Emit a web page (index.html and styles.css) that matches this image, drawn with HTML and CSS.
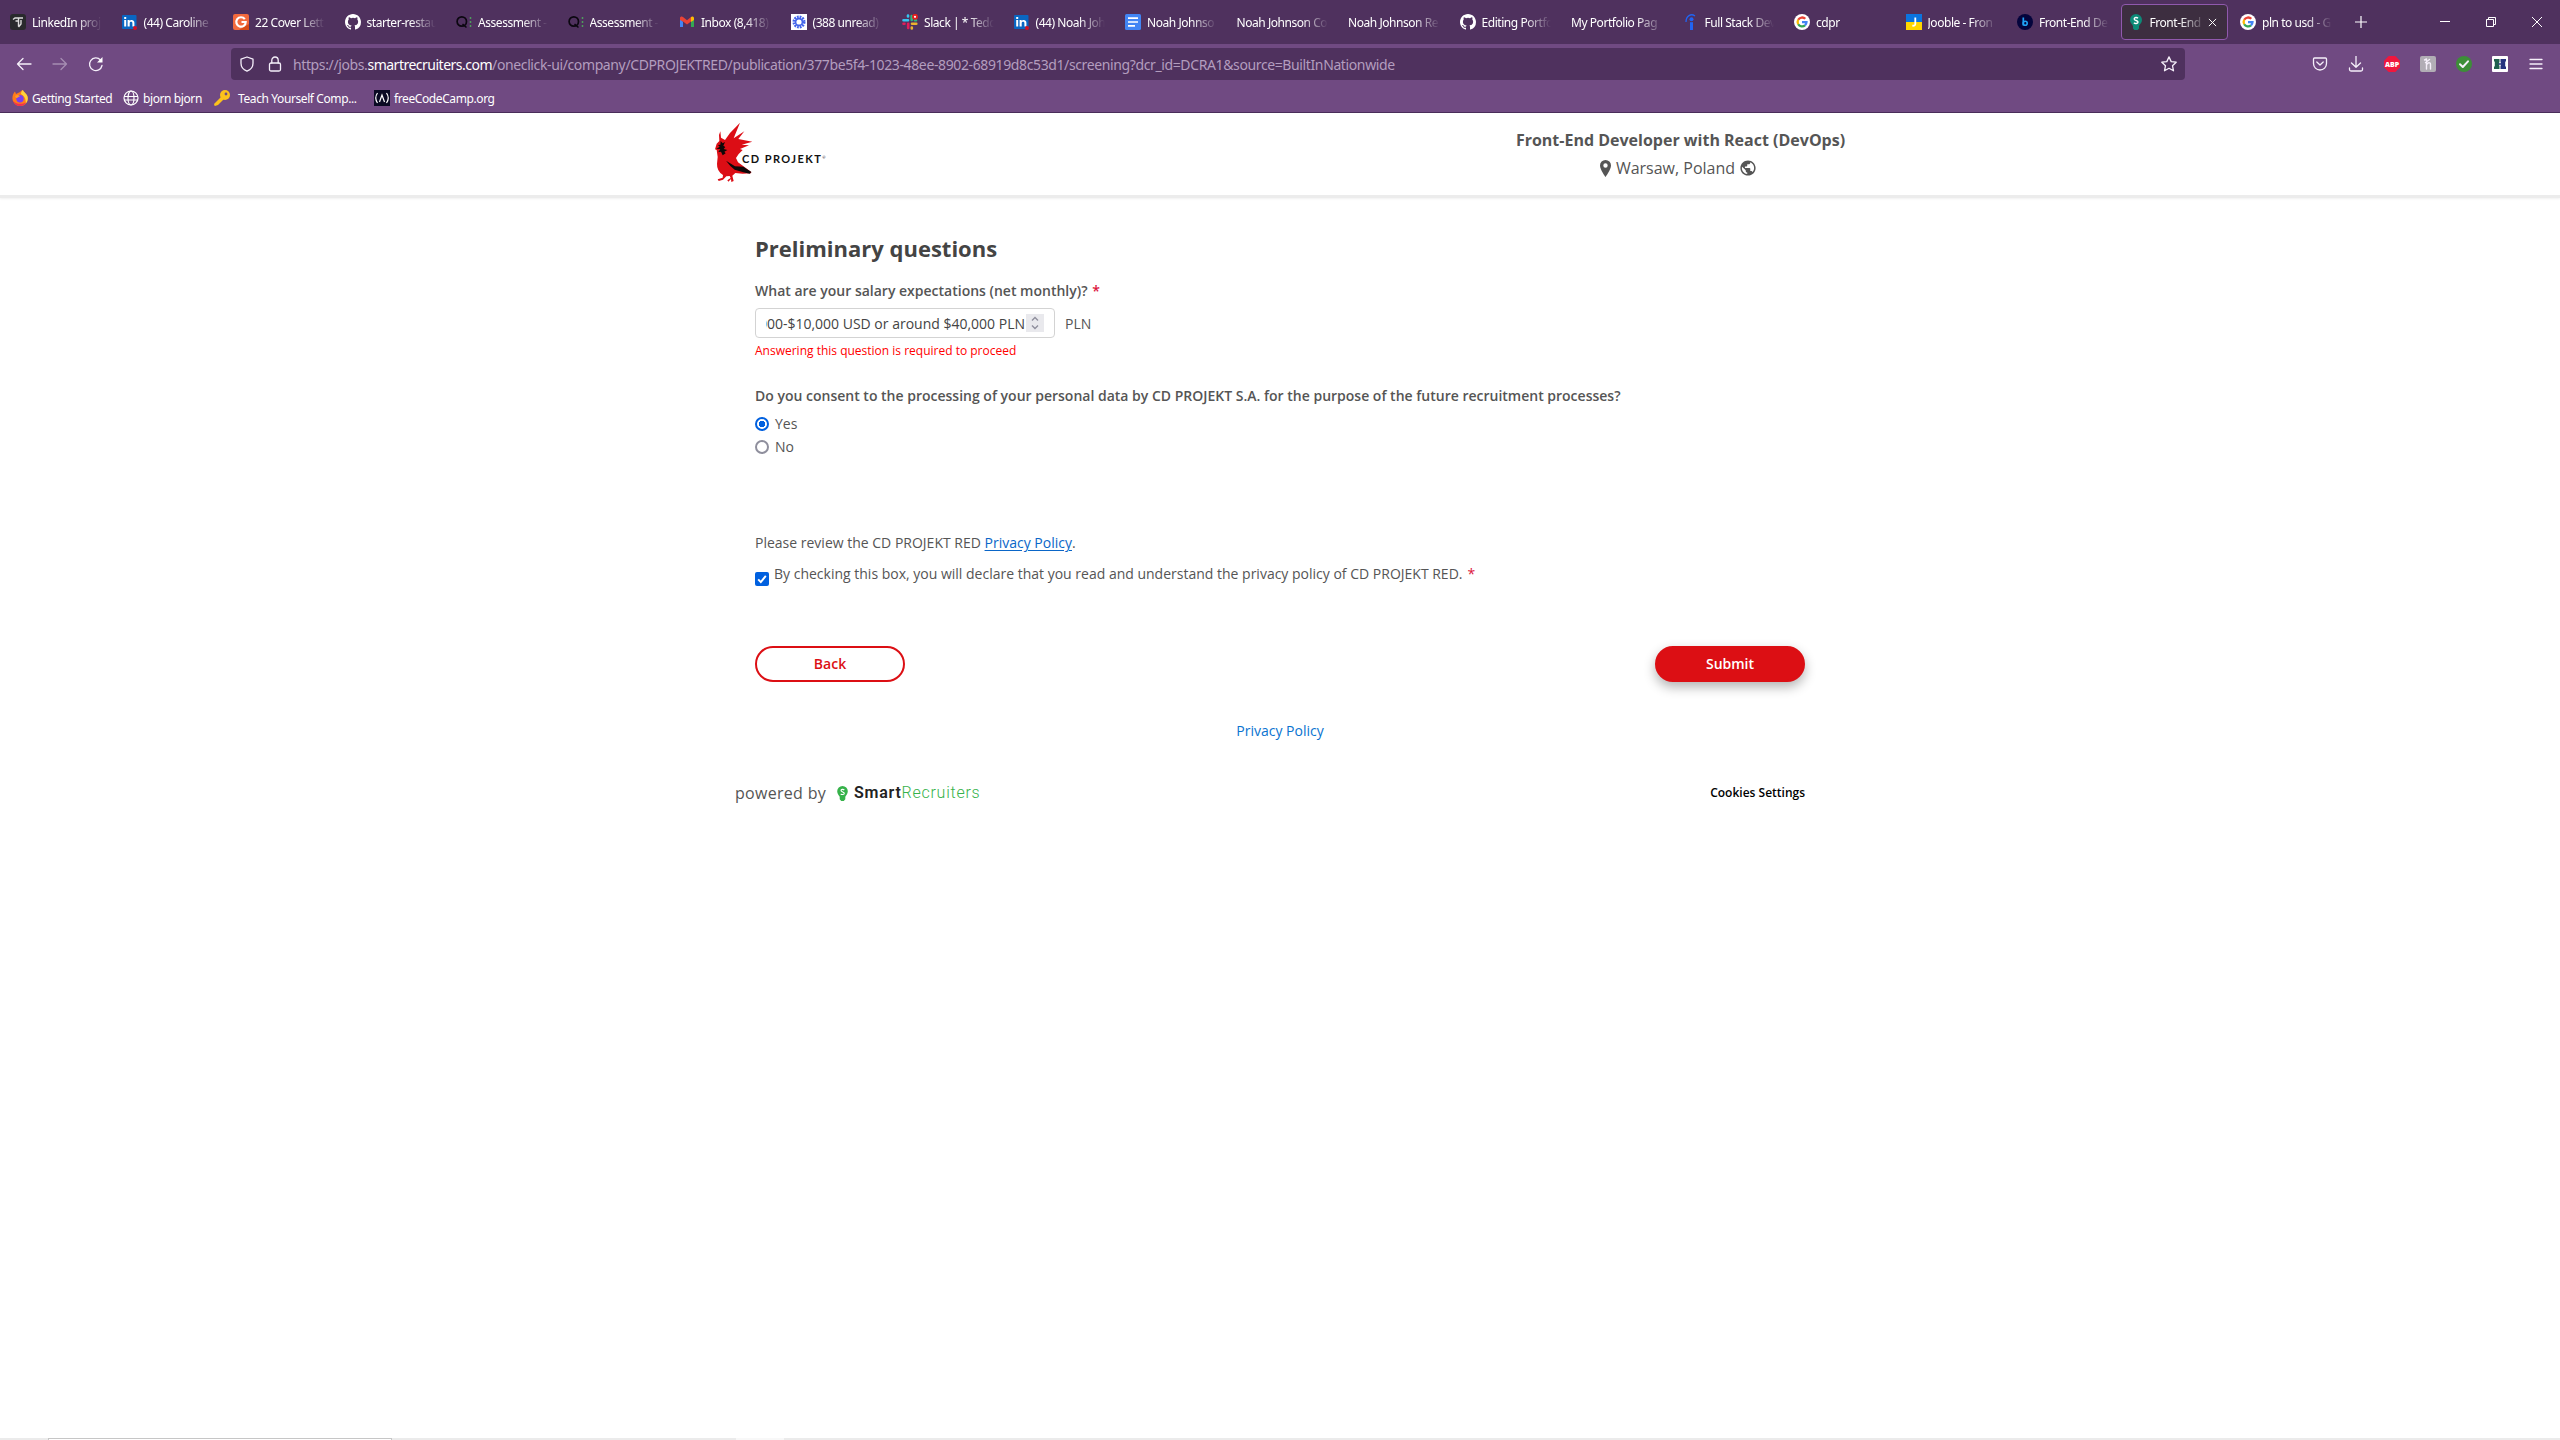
FILE: index.html
```html
<!DOCTYPE html>
<html lang="en">
<head>
<meta charset="utf-8">
<title>Front-End Developer with React (DevOps)</title>
<link rel="stylesheet" href="styles.css">
</head>
<body>
<svg class="defs" aria-hidden="true">
  <symbol id="github" viewBox="0 0 16 16"><path fill="#fff" d="M8 0C3.58 0 0 3.58 0 8c0 3.54 2.29 6.53 5.47 7.59.4.07.55-.17.55-.38 0-.19-.01-.82-.01-1.49-2.01.37-2.53-.49-2.69-.94-.09-.23-.48-.94-.82-1.13-.28-.15-.68-.52-.01-.53.63-.01 1.08.58 1.23.82.72 1.21 1.87.87 2.33.66.07-.52.28-.87.51-1.07-1.78-.2-3.64-.89-3.64-3.95 0-.87.31-1.59.82-2.15-.08-.2-.36-1.02.08-2.12 0 0 .67-.21 2.2.82a7.6 7.6 0 0 1 4 0c1.53-1.04 2.2-.82 2.2-.82.44 1.1.16 1.92.08 2.12.51.56.82 1.27.82 2.15 0 3.07-1.87 3.75-3.65 3.95.29.25.54.73.54 1.48 0 1.07-.01 1.93-.01 2.2 0 .21.15.46.55.38A8 8 0 0 0 16 8c0-4.42-3.58-8-8-8z"/></symbol>
  <symbol id="linkedin" viewBox="0 0 16 16"><rect x="0" y="1" width="14.5" height="14" rx="1" fill="#0a66c2"/><path fill="#fff" d="M2.2 6h2v6.600h-2zM2.200 3h2v2h-2zM5.600 6h2v1c.9-1.600 4.800-1.700 4.800 1.700v3.900h-2V9.200c0-2-2.700-1.900-2.700 0v3.400H5.600z"/><circle cx="13" cy="14" r="2" fill="#d11124"/></symbol>
  <symbol id="google" viewBox="0 0 16 16"><circle cx="8" cy="8" r="8" fill="#fff"/><g fill="none" stroke-width="2.300"><path stroke="#ea4335" d="M4.200 5.800A4.500 4.500 0 0 1 11.300 4.800"/><path stroke="#fbbc05" d="M4.200 10.200a4.500 4.500 0 0 1 0-4.400"/><path stroke="#34a853" d="M11 11.400a4.500 4.500 0 0 1-6.800-1.200"/><path stroke="#4285f4" d="M8 8.100h4.500A4.500 4.500 0 0 1 11 11.400"/></g></symbol>
  <symbol id="quiz" viewBox="0 0 16 16"><circle cx="5.800" cy="7.500" r="4.700" fill="none" stroke="#0b0710" stroke-width="1.700"/><path d="M6.500 10l4 3.500" stroke="#0b0710" stroke-width="1.600"/><path d="M14.500 3v11" stroke="#4e9c5b" stroke-width="1.500" stroke-dasharray="2 2"/></symbol>
</svg>

<header class="browser">
  <div class="tabs">
    <div class="tab"><svg class="fav" viewBox="0 0 16 16"><rect width="16" height="16" rx="3" fill="#292a2d"/><path d="M3 5.500L5 4h8M5.500 7h3v5.500M8.500 4v3M11 6v4l-2.500 3" fill="none" stroke="#ddd" stroke-width="1.400"/></svg><span class="label">LinkedIn proj</span></div>
    <div class="tab"><svg class="fav"><use href="#linkedin"/></svg><span class="label">(44) Caroline</span></div>
    <div class="tab"><svg class="fav" viewBox="0 0 16 16"><rect width="16" height="16" rx="2" fill="#f26a3d"/><path d="M6 16l10-6v6z" fill="#d84b17"/><path d="M11.800 5.200A4.700 4.700 0 1 0 12.700 8H8.500" fill="none" stroke="#fff" stroke-width="2.200"/></svg><span class="label">22 Cover Lett</span></div>
    <div class="tab"><svg class="fav"><use href="#github"/></svg><span class="label">starter-restau</span></div>
    <div class="tab"><svg class="fav"><use href="#quiz"/></svg><span class="label">Assessment -</span></div>
    <div class="tab"><svg class="fav"><use href="#quiz"/></svg><span class="label">Assessment -</span></div>
    <div class="tab"><svg class="fav" viewBox="0 0 16 16"><path d="M1 3v10h3V8z" fill="#4285f4"/><path d="M12 8v5h3V4z" fill="#34a853"/><path d="M1 4c0-1.500 2-2 3-1l4 3.200L12 3v4.500L8 10.500 4 7.500 1 6z" fill="#ea4335"/><path d="M12 3c1-1 3-.5 3 1v2l-3 2z" fill="#fbbc04"/></svg><span class="label">Inbox (8,418)</span></div>
    <div class="tab"><svg class="fav" viewBox="0 0 16 16"><rect width="16" height="16" fill="#fff"/><circle cx="8" cy="8" r="5" fill="none" stroke="#4263eb" stroke-width="3" stroke-dasharray="1.700 .918"/><circle cx="8" cy="8" r="3.400" fill="none" stroke="#4263eb" stroke-width="1.600"/></svg><span class="label">(388 unread)</span></div>
    <div class="tab"><svg class="fav" viewBox="0 0 16 16"><g stroke-width="2.600" stroke-linecap="round"><path d="M1.500 6.200H6M6 1.500v1" stroke="#36c5f0"/><path d="M9.700 2v4M13 6.200h1" stroke="#2eb67d"/><path d="M14.300 9.800H10M9.800 13.500v1" stroke="#ecb22e"/><path d="M6.200 14V9.800M1.500 9.800h1" stroke="#e01e5a"/></g><circle cx="13" cy="2.800" r="3" fill="#e01e1e"/><circle cx="13" cy="2.800" r="1.100" fill="#fff"/></svg><span class="label">Slack | * Tedd</span></div>
    <div class="tab"><svg class="fav"><use href="#linkedin"/></svg><span class="label">(44) Noah Joh</span></div>
    <div class="tab"><svg class="fav" viewBox="0 0 16 16"><rect width="16" height="16" rx="1.500" fill="#4285f4"/><path d="M3 4.200h10M3 8h10M3 11.800h7" stroke="#fff" stroke-width="1.700"/></svg><span class="label">Noah Johnso</span></div>
    <div class="tab"><span class="label">Noah Johnson Co</span></div>
    <div class="tab"><span class="label">Noah Johnson Re</span></div>
    <div class="tab"><svg class="fav"><use href="#github"/></svg><span class="label">Editing Portfo</span></div>
    <div class="tab"><span class="label">My Portfolio Pag</span></div>
    <div class="tab"><svg class="fav" viewBox="0 0 16 16"><circle cx="8.500" cy="5.300" r="2" fill="#2164f3"/><path d="M7 8.200h3V16H7z" fill="#2164f3"/><path d="M3 8C3 2 8-1 12 2" fill="none" stroke="#2164f3" stroke-width="1.300"/></svg><span class="label">Full Stack Dev</span></div>
    <div class="tab"><svg class="fav"><use href="#google"/></svg><span class="label">cdpr</span></div>
    <div class="tab"><svg class="fav" viewBox="0 0 16 16"><path d="M0 0h16v8H0z" fill="#0b74e0"/><path d="M0 8h16v8H0z" fill="#ffd600"/><path d="M9.300 3.500V10q0 2-3 1.700" fill="none" stroke="#fff" stroke-width="1.800"/></svg><span class="label">Jooble - Fron</span></div>
    <div class="tab"><svg class="fav" viewBox="0 0 16 16"><circle cx="8" cy="8" r="8" fill="#04043c"/><path d="M6.300 3.500v8" stroke="#1fa2f5" stroke-width="1.700"/><circle cx="8.200" cy="9.300" r="2" fill="none" stroke="#1fa2f5" stroke-width="1.600"/></svg><span class="label">Front-End De</span></div>
    <div class="tab tab-active"><svg class="fav" viewBox="0 0 16 16"><path d="M8 0a6 6 0 0 1 6 6c0 3-2.500 4.500-3 6v2.500L9.500 16h-3L5 14.500V12C4.500 10.500 2 9 2 6a6 6 0 0 1 6-6z" fill="#0d8a78"/><path d="M10 4.200C9 3.200 6.200 3.200 6.200 5S10 6.200 10 8s-3 1.900-4.100.7" fill="none" stroke="#fff" stroke-width="1.400"/></svg><span class="label">Front-End</span><svg class="close" viewBox="0 0 10 10"><path d="M1 1l8 8M9 1L1 9" stroke="#fff" stroke-width="1.100"/></svg></div>
    <div class="tab"><svg class="fav"><use href="#google"/></svg><span class="label">pln to usd - G</span></div>
    <svg class="new-tab" viewBox="0 0 12 12"><path d="M6 0v12M0 6h12" stroke="#fff" stroke-width="1.200"/></svg>
    <div class="window-controls">
      <svg viewBox="0 0 12 12"><path d="M1 5.500h10" stroke="#fff"/></svg>
      <svg viewBox="0 0 12 12"><path d="M1.500 3.500h7v7h-7zM3.500 3.500v-2h7v7h-2" fill="none" stroke="#fff"/></svg>
      <svg viewBox="0 0 12 12"><path d="M1 1l10 10M11 1L1 11" stroke="#fff"/></svg>
    </div>
  </div>

  <div class="toolbar">
    <div class="nav-buttons">
      <svg viewBox="0 0 16 16"><path d="M15 8H1.500M7 2.500L1.500 8 7 13.500"/></svg>
      <svg class="dim" viewBox="0 0 16 16"><path d="M1 8h13.500M9 2.500L14.500 8 9 13.500"/></svg>
      <svg viewBox="0 0 16 16"><path d="M14 9.500A6.300 6.300 0 1 1 12.500 4"/><path d="M14.500 1v5.500H9z" fill="#fff" stroke="none"/></svg>
    </div>
    <div class="url-bar">
      <svg viewBox="0 0 16 16"><path d="M8 1l6 2.200v4C14 11 11.500 13.800 8 15.200 4.500 13.800 2 11 2 7.200v-4z"/></svg>
      <svg viewBox="0 0 16 16"><rect x="2.500" y="7" width="11" height="8" rx="1.500"/><path d="M4.800 7V4.200a3.200 3.200 0 0 1 6.400 0V7"/></svg>
      <span class="url">https://jobs.<b>smartrecruiters.com</b>/oneclick-ui/company/CDPROJEKTRED/publication/377be5f4-1023-48ee-8902-68919d8c53d1/screening?dcr_id=DCRA1&amp;source=BuiltInNationwide</span>
      <svg class="star" viewBox="0 0 16 16"><path d="M8 .9l2.200 4.700 5 .6-3.700 3.500 1 5.100L8 12.300l-4.500 2.500 1-5.100L.8 6.200l5-.6z"/></svg>
    </div>
    <div class="extensions">
      <svg viewBox="0 0 16 16"><path d="M2.500 2h11q1 0 1 1v4.500a6.500 6.500 0 0 1-13 0V3q0-1 1-1zM4.800 6L8 9l3.200-3"/></svg>
      <svg viewBox="0 0 16 16"><path d="M8 0v11M3.500 7L8 11.300 12.500 7M1.500 12v1.500q0 1.500 1.500 1.500h10q1.500 0 1.500-1.500V12"/></svg>
      <svg viewBox="0 0 16 16"><path d="M4.700 0h6.600L16 4.700v6.600L11.300 16H4.700L0 11.300V4.700z" fill="#f0173d" stroke="none"/><text x="8" y="10.700" class="abp">ABP</text></svg>
      <svg viewBox="0 0 16 16"><rect width="16" height="16" rx="2" fill="#b1adb5" stroke="none"/><path d="M4.500 4l2-1v10M6.500 9c1-3 4-3 4-.5V13M9.500 3.500l-4 3" stroke-width="1.400"/></svg>
      <svg viewBox="0 0 16 16"><circle cx="8" cy="8" r="8" fill="#3d8e38" stroke="none"/><path d="M4 8.300l2.800 2.700L12 5.300" stroke-width="2"/></svg>
      <svg viewBox="0 0 16 16"><rect width="16" height="16" rx="1" fill="#fff" stroke="none"/><path d="M2 3h5.500v2.500L6.800 8l.7 2.500V13H2v-2.500h.8v-5H2z" fill="#20604f" stroke="none"/><path d="M8.500 3H14v2.500h-.8v5h.8V13H8.500v-2.500L9.200 8l-.7-2.500z" fill="#26337f" stroke="none"/><path d="M6.500 8h3" stroke="#26337f" stroke-width="1.500" stroke-linecap="butt"/></svg>
      <svg viewBox="0 0 16 16"><path d="M2 3.500h12M2 8h12M2 12.500h12"/></svg>
    </div>
  </div>

  <nav class="bookmarks">
    <span class="bookmark bm-started"><svg viewBox="0 0 16 16"><path d="M8 2c2-2 3-2 3-2 0 2 4.800 3.500 4.800 8.500A7.500 7.500 0 0 1 8 16 7.600 7.600 0 0 1 .4 8.500C.4 5 2 2.500 3 1.500L4 4z" fill="#ff7a1a"/><path d="M11 0c0 2 4.800 3.500 4.800 8.500 0 2-1 4-2 5C14 8 12 6 9 4c0-2 1-3.500 2-4z" fill="#ffd23c"/><path d="M1 11c1 3 4 5 7 5 3 0 5-1.500 6-3.500-3 2-10 2-13-1.500z" fill="#f2304f"/><circle cx="8" cy="8.800" r="3.700" fill="#7a3ff0"/><path d="M3 6c2-1.500 4-1 5 .5-2 0-2 2-4 1.500z" fill="#ff9a2a"/></svg><span>Getting Started</span></span>
    <span class="bookmark bm-bjorn"><svg viewBox="0 0 16 16" fill="none" stroke="#fff" stroke-width="1.200"><circle cx="8" cy="8" r="7"/><ellipse cx="8" cy="8" rx="3" ry="7"/><path d="M1 6.500h14M1 10h14"/></svg><span>bjorn bjorn</span></span>
    <span class="bookmark bm-teach"><svg viewBox="0 0 16 16"><circle cx="11" cy="5" r="5" fill="#fcc21b"/><path d="M8 6l2.500 2.500L4 15l-3 1-1-1 .5-1.500z" fill="#fcc21b"/><circle cx="12" cy="4" r="1.400" fill="#704a82"/></svg><span>Teach Yourself Comp...</span></span>
    <span class="bookmark"><svg viewBox="0 0 16 16"><rect width="16" height="16" fill="#0a0a23"/><path d="M3.500 3Q0 8 3.500 13M12.500 3Q16 8 12.500 13M5.500 12L8 5l2.500 7" fill="none" stroke="#fff" stroke-width="1.200"/></svg><span>freeCodeCamp.org</span></span>
  </nav>
</header>

<div class="page-header">
  <div class="brand">
    <svg class="bird" viewBox="75 37 117 184">
      <path fill="#dc0d15" d="M150 39L131 86 163 65 145 88 187 96 155 105 177 107 150 118 158 121 146 133 138 145 144 158 184 187 183 191 158 192 136 190 127 198 131 214 124 217 123 208 115 216 112 212 122 205 119 199 109 200 99 210 86 214 83 209 98 204 99 196Q80 184 81 162L83 142 80 121 75 119 80 102 88 94 87 76 91 65 93 84 105 91 120 70z"/>
      <path fill="#0d0808" d="M108 153L135 170 160 171 184 187 179 192 160 188 134 180 121 169zM92 94L98 101 105 97 100 108 106 112 101 118 112 121 103 126 107 131 98 137 93 126 85 127 91 118 79 118 89 111 84 106 91 105z"/>
    </svg>
    <span class="brand-name">CD PROJEKT<i>®</i></span>
  </div>
  <div class="job">
    <div class="job-title">Front-End Developer with React (DevOps)</div>
    <div class="job-place">
      <svg class="pin" viewBox="0 0 11 17"><path fill="#555" fill-rule="evenodd" d="M5.500 0A5.500 5.500 0 0 1 11 5.500C11 9.500 5.500 17 5.500 17S0 9.500 0 5.500A5.500 5.500 0 0 1 5.500 0zm0 3.300a2.200 2.200 0 1 0 0 4.400 2.200 2.200 0 0 0 0-4.400z"/></svg>
      <span>Warsaw, Poland</span>
      <svg class="globe" viewBox="1.500 1.500 21 21"><path fill="#555" d="M12 2C6.480 2 2 6.480 2 12s4.480 10 10 10 10-4.480 10-10S17.520 2 12 2zm-1 17.930c-3.950-.49-7-3.850-7-7.930 0-.62.080-1.210.21-1.790L9 15v1c0 1.100.9 2 2 2v1.930zm6.900-2.540c-.26-.81-1-1.390-1.900-1.390h-1v-3c0-.55-.45-1-1-1H8v-2h2c.55 0 1-.45 1-1V7h2c1.100 0 2-.9 2-2v-.41c2.930 1.190 5 4.060 5 7.410 0 2.080-.8 3.970-2.100 5.390z"/></svg>
    </div>
  </div>
</div>

<main class="form">
  <h1>Preliminary questions</h1>
  <p class="question">What are your salary expectations (net monthly)? <span class="required">*</span></p>
  <div class="salary">
    <div class="field"><div class="value"><span>000-$10,000 USD or around $40,000 PLN</span></div><svg class="spinner" viewBox="0 0 18 18"><rect width="18" height="18" fill="#e9e9ed"/><path d="M6 6.500l3-3 3 3M6 11.500l3 3 3-3" fill="none" stroke="#8f8f9d" stroke-width="1.400"/></svg></div>
    <span class="unit">PLN</span>
  </div>
  <p class="error">Answering this question is required to proceed</p>
  <p class="question consent">Do you consent to the processing of your personal data by CD PROJEKT S.A. for the purpose of the future recruitment processes?</p>
  <div class="option"><span class="radio radio-on"></span>Yes</div>
  <div class="option"><span class="radio"></span>No</div>
  <p class="review">Please review the CD PROJEKT RED <a href="#">Privacy Policy</a>.</p>
  <div class="agree"><svg class="checkbox" viewBox="0 0 14 14"><rect width="14" height="14" rx="2" fill="#0060df"/><path d="M3.200 7.300l2.600 2.800 5-6.200" fill="none" stroke="#fff" stroke-width="1.900"/></svg><span>By checking this box, you will declare that you read and understand the privacy policy of CD PROJEKT RED.</span><span class="required">*</span></div>
  <div class="actions"><button class="btn btn-back">Back</button><button class="btn btn-submit">Submit</button></div>
  <a class="policy" href="#">Privacy Policy</a>
</main>

<footer class="footer">
  <span class="powered">powered by</span>
  <svg class="bulb" viewBox="0 0 11 15"><path d="M5.500 0A5.300 5.300 0 0 1 10.800 5.300c0 2.700-1.800 4-2.500 5.500v2.500L6.800 15H4.200l-1.500-1.700v-2.500C2 9.300.2 8 .2 5.300A5.300 5.300 0 0 1 5.500 0z" fill="#36b24a"/><path d="M7.300 4C6.300 3 4 3.100 4 4.600s3.300 1.100 3.300 2.600S4.700 8.900 3.700 7.800" fill="none" stroke="#fff" stroke-width="1.100"/></svg>
  <span class="smart"><b>Smart</b>Recruiters</span>
  <span class="cookies">Cookies Settings</span>
</footer>

<div class="bottom-edge"><span class="edge-box"></span><span class="edge-gap"></span></div>
</body>
</html>
```
FILE: styles.css
```css
* { box-sizing: border-box; }
body {
  margin: 0;
  width: 2560px;
  height: 1440px;
  overflow: hidden;
  display: flex;
  flex-direction: column;
  background: #fff;
  color: #555;
  font: 14px/20px "Open Sans", sans-serif;
}
.defs { display: none; }
svg { display: block; flex: none; }
p, h1 { margin: 0; }

/* browser chrome */
.browser {
  height: 113px;
  flex: none;
  background: #704a82;
  border-bottom: 1px solid #4a2d5a;
  color: #fff;
  font-family: "Noto Sans", "Open Sans", sans-serif;
  font-size: 12px;
}
.tabs { display: flex; align-items: center; height: 44px; background: #4f315e; }
.tab { width: 111.5px; height: 36px; flex: none; display: flex; align-items: center; gap: 6px; padding: 0 10px; }
.tab-active { width: 107px; margin: 0 2.5px 0 2px; padding: 0 10px 0 6px; background: #3d2e40; border: 1px solid #9059ad; border-radius: 4px; }
.fav { width: 16px; height: 16px; }
.label {
  flex: 1;
  min-width: 0;
  padding-top: 2px;
  overflow: hidden;
  white-space: nowrap;
  letter-spacing: -0.45px;
  -webkit-mask-image: linear-gradient(to left, transparent, #000 26px);
  mask-image: linear-gradient(to left, transparent, #000 26px);
}
.tab-active .label { margin-right: -4px; }
.close { width: 9px; height: 9px; }
.new-tab { width: 12px; height: 12px; margin-left: 13px; }
.window-controls { margin-left: auto; display: flex; gap: 34px; padding-right: 17px; }
.window-controls svg { width: 12px; height: 12px; }

.toolbar { display: flex; align-items: center; height: 40px; }
.toolbar svg { width: 16px; height: 16px; fill: none; stroke: #f5effa; stroke-width: 1.3; stroke-linecap: round; stroke-linejoin: round; }
.nav-buttons { width: 231px; padding-left: 16px; display: flex; gap: 20px; }
.toolbar .dim { opacity: .4; }
.url-bar { width: 1954px; height: 32px; padding: 0 8px; display: flex; align-items: center; gap: 12px; border-radius: 4px; background: #4f315e; }
.url { flex: 1; margin-left: -2px; padding-top: 2px; font-size: 14px; color: #b39dbe; white-space: nowrap; letter-spacing: -0.38px; }
.url b { font-weight: 400; color: #fff; letter-spacing: -0.5px; }
.extensions { margin-left: auto; padding-right: 16px; display: flex; gap: 20px; }
.toolbar .abp { font: 800 7px "Open Sans", sans-serif; fill: #fff; stroke: none; text-anchor: middle; }

.bookmarks { display: flex; align-items: center; height: 28px; padding-left: 12px; letter-spacing: -0.4px; white-space: nowrap; }
.bookmark { display: flex; align-items: center; gap: 4px; }
.bookmark span { padding-top: 2px; }
.bookmark svg { width: 16px; height: 16px; }
.bm-started { width: 111px; }
.bm-bjorn { width: 91px; }
.bm-teach { width: 160px; gap: 8px; }

/* page header */
.page-header {
  height: 85px;
  flex: none;
  padding: 0 714px 0 715px;
  display: flex;
  justify-content: space-between;
  border-bottom: 3px solid #ececec;
  box-shadow: 0 1px 2px rgba(0, 0, 0, .06);
}
.brand { display: flex; align-items: flex-start; padding-top: 9px; }
.bird { width: 39px; height: 61.3px; }
.brand-name { margin: 25px 0 0 -12px; font: 700 11px/24px Lato, sans-serif; letter-spacing: 1.45px; color: #111; white-space: nowrap; }
.brand-name i { font: 4px Lato, sans-serif; vertical-align: 4px; }
.job { width: 331px; padding-top: 15px; text-align: center; white-space: nowrap; }
.job-title { font-weight: 700; font-size: 16px; line-height: 24px; }
.job-place { display: flex; justify-content: center; align-items: center; gap: 5px; margin: 4px 5px 0 0; font-size: 16px; line-height: 24px; }
.pin { width: 11px; height: 17px; }
.globe { width: 16px; height: 16px; }

/* screening form */
.form { width: 1050px; margin: 35px auto 0; display: flex; flex-direction: column; flex: none; }
h1 { font-size: 22px; line-height: 30px; font-weight: 700; color: #444; }
.question { margin-top: 18px; font-weight: 600; white-space: nowrap; }
.required { color: #dc143c; }
.question .required { margin-left: 1px; }
.salary { display: flex; align-items: center; gap: 10px; margin-top: 7px; height: 30px; }
.field { width: 300px; height: 30px; padding: 0 10px 0 9px; display: flex; align-items: center; border: 1px solid #d3d3d3; border-radius: 4px; color: #444; }
.value { width: 259px; margin: 0 1px; padding-top: 2px; overflow: hidden; display: flex; justify-content: flex-end; white-space: nowrap; }
.unit { padding-top: 2px; }
.spinner { width: 18px; height: 18px; }
.error { margin-top: 4px; font-size: 12px; line-height: 18px; color: #f00; }
.consent { margin: 26px 0 6px; }
.option { display: flex; align-items: center; gap: 6px; height: 23px; }
.radio { width: 14px; height: 14px; border: 2px solid #8f8f9d; border-radius: 50%; }
.radio-on { border-color: #0060df; background: radial-gradient(circle, #0060df 3px, #fff 3.5px); }
.review { margin-top: 75px; }
.review a { color: #0a66c8; text-underline-offset: 2px; }
.agree { display: flex; height: 20px; margin-top: 11px; }
.checkbox { width: 14px; height: 14px; margin: 8px 5px 0 0; }
.agree .required { margin-left: 5px; }
.actions { display: flex; justify-content: space-between; margin-top: 62px; }
.btn { width: 150px; height: 36px; padding: 0; border: 2px solid #dc0f14; border-radius: 18px; font: 600 14px/20px "Open Sans", sans-serif; }
.btn-back { background: #fff; color: #dc0f14; }
.btn-submit { background: #dc0f14; color: #fff; box-shadow: 0 5px 12px rgba(0, 0, 0, .3); }
.policy { align-self: center; margin-top: 39px; color: #0a73d0; text-decoration: none; }

/* footer */
.footer { width: 1070px; height: 24px; margin: 40px 0 0 735px; display: flex; align-items: center; flex: none; line-height: 24px; white-space: nowrap; }
.powered { width: 102px; font-size: 16px; font-weight: 500; letter-spacing: .3px; }
.bulb { width: 11px; height: 15px; }
.smart { margin-left: 6px; font: 300 16px/24px Roboto, sans-serif; letter-spacing: .75px; color: #36b24a; }
.smart b { font-weight: 600; color: #222; }
.cookies { margin-left: auto; font-size: 12px; font-weight: 600; color: #000; }

/* strip at the bottom of the screen */
.bottom-edge { margin-top: auto; height: 2px; flex: none; display: flex; background: #ebebeb; }
.edge-box { width: 344px; margin-left: 48px; background: #fff; border: 1px solid #c6c6c6; border-bottom: 0; }
.edge-gap { width: 48px; margin-left: 344px; background: #f8f8f8; }
```
